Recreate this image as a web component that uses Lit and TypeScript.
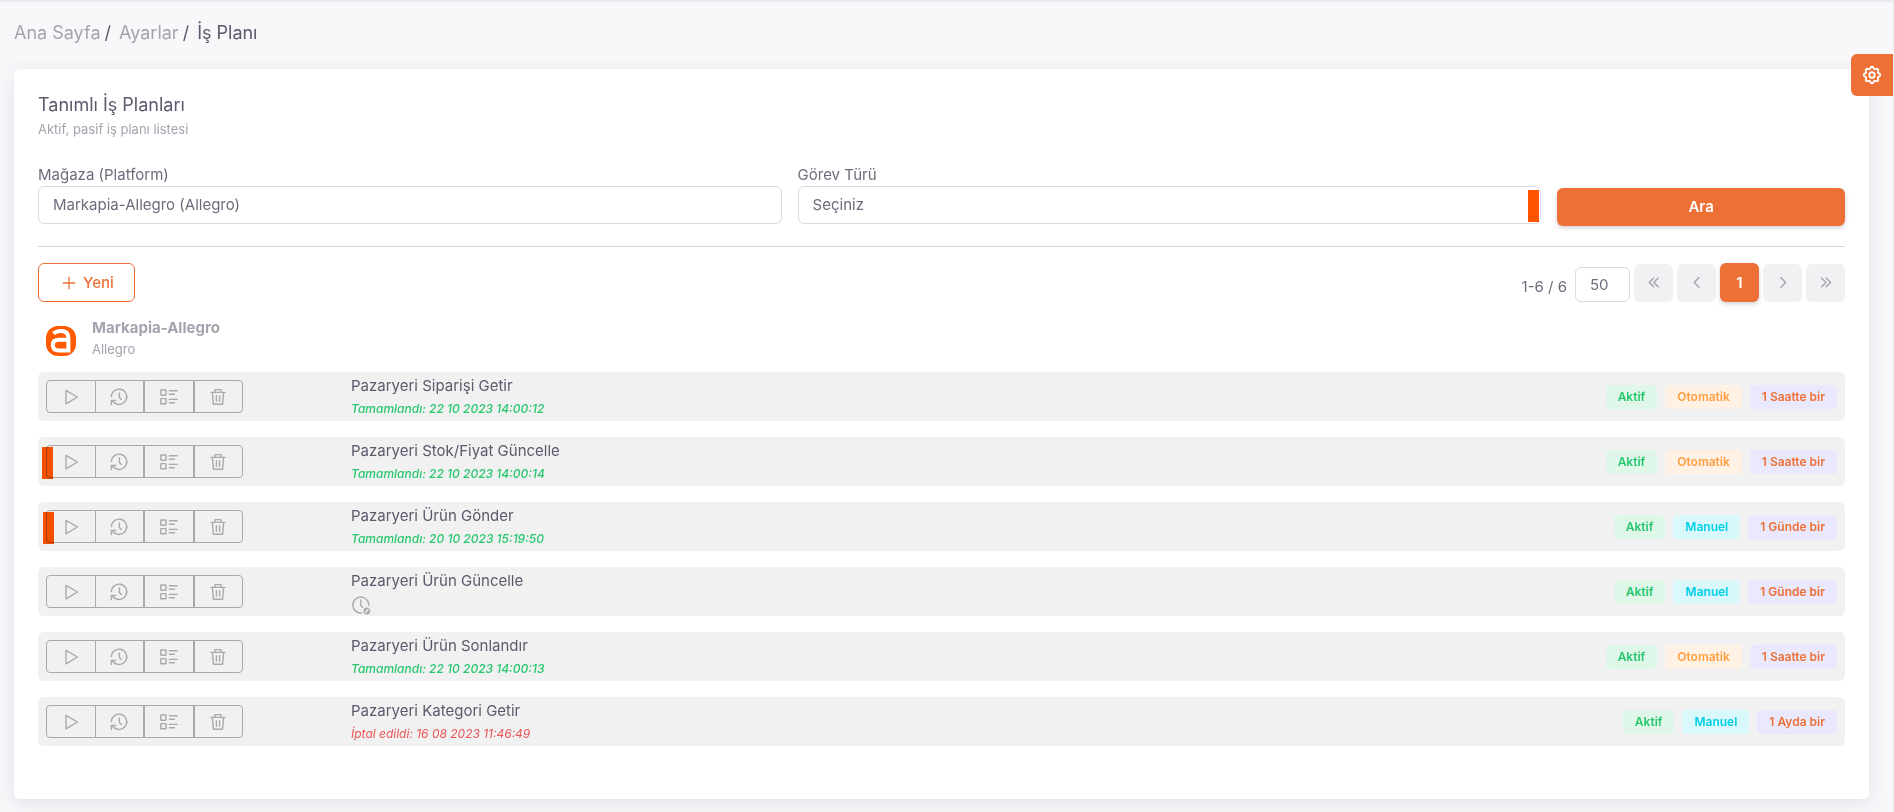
import { LitElement, html, css, svg } from "lit";
import { customElement } from "lit/decorators.js";

type Job = {
  name: string;
  state: "done" | "cancelled" | "waiting";
  time?: string;
  manual: boolean;
  period: string;
  mark?: "first" | "second";
};

const JOBS: Job[] = [
  { name: "Pazaryeri Siparişi Getir", state: "done", time: "22 10 2023 14:00:12", manual: false, period: "1 Saatte bir" },
  { name: "Pazaryeri Stok/Fiyat Güncelle", state: "done", time: "22 10 2023 14:00:14", manual: false, period: "1 Saatte bir", mark: "first" },
  { name: "Pazaryeri Ürün Gönder", state: "done", time: "20 10 2023 15:19:50", manual: true, period: "1 Günde bir", mark: "second" },
  { name: "Pazaryeri Ürün Güncelle", state: "waiting", manual: true, period: "1 Günde bir" },
  { name: "Pazaryeri Ürün Sonlandır", state: "done", time: "22 10 2023 14:00:13", manual: false, period: "1 Saatte bir" },
  { name: "Pazaryeri Kategori Getir", state: "cancelled", time: "16 08 2023 11:46:49", manual: true, period: "1 Ayda bir" },
];

const icon = (body: unknown, size = 20) => html`<svg
  class="icon" width=${size} height=${size} viewBox="0 0 20 20" fill="none"
  stroke="currentColor" stroke-width="1.4" stroke-linejoin="round" stroke-linecap="round" aria-hidden="true"
>${body}</svg>`;

const ICONS = {
  play: svg`<path d="M5 3.4 16.4 10 5 16.8Z"/>`,
  history: svg`<path d="M2.4 9.6a7.7 7.7 0 1 1 3.4 6.6"/><path d="M2.4 17.6v-4.2h4.4M2.6 13.6l3.8 2.9"/><path d="M10.4 6v4.6l2 2"/>`,
  list: svg`<rect x="1.8" y="3" width="5.2" height="5.2" rx=".4"/><rect x="1.8" y="11.6" width="5.2" height="5.2" rx=".4"/><path d="M10.4 3.8h7.8M10.4 7.2h5M10.4 12.4h7.8M10.4 15.8h5"/>`,
  trash: svg`<path d="M3 5.4h14M4.4 5.4l1 11.8h9.2l1-11.8M7 5.2V2.6h6v2.6M8.4 8.8v5.4M11.6 8.8v5.4"/>`,
  plus: svg`<path d="M10 3.6v12.8M3.6 10h12.8"/>`,
  first: svg`<path d="m9.6 5-4.4 4.4 4.4 4.4M14.2 5 9.8 9.4l4.4 4.4"/>`,
  prev: svg`<path d="m12 4.6-4.8 4.8 4.8 4.8"/>`,
  next: svg`<path d="m7.8 4.6 4.8 4.8-4.8 4.8"/>`,
  last: svg`<path d="m5.6 5 4.4 4.4-4.4 4.4M10.2 5l4.4 4.4-4.4 4.4"/>`,
  waiting: svg`<path d="M17.8 10.4A8 8 0 1 0 10.6 18"/><path d="M9.8 5v5.2l1.8 2"/><circle cx="15.8" cy="16" r="3.4" fill="currentColor" stroke="none"/><path d="m14.4 17.2 2.8-2.6" stroke="#f1f1f1"/>`,
};

@customElement("app-root")
export class AppRoot extends LitElement {
  static styles = css`
    :host {
      display: block;
      min-height: 100vh;
      box-sizing: border-box;
      position: relative;
      padding: 16px 24px 13px 14px;
      background: #f8f7fa;
      border-right: 1px solid #eeedf1;
      box-shadow: inset 0 3px 3px -2px rgba(75, 70, 92, 0.14);
      font: 15px/22px Inter, "Liberation Sans", sans-serif;
      color: #6f6b7d;
    }
    *, *::before { box-sizing: border-box; }
    button, input, select { font: inherit; color: inherit; margin: 0; }
    button { cursor: pointer; }
    .icon { display: block; }
    .crumbs { display: flex; gap: 4px; font-size: 18px; line-height: 34px; color: #5d596c; }
    .crumbs a { color: #a5a3ae; text-decoration: none; }
    .crumbs a + span { margin-right: 4px; }
    .settings {
      position: absolute; right: 0; top: 54px; width: 42px; height: 42px;
      display: grid; place-items: center; border: 0; padding: 0;
      background: #ed7137; color: #fff; border-radius: 6px 0 0 6px;
    }
    .card {
      margin-top: 19px; padding: 24px 24px 53px; background: #fff; border-radius: 6px;
      box-shadow: 0 4px 18px rgba(75, 70, 92, 0.12);
    }
    h1 { margin: 0; font-weight: 400; font-size: 18px; line-height: 24px; color: #5d596c; }
    .sub { margin: 2px 0 0; font-size: 13px; line-height: 20px; color: #a5a3ae; }
    .filters { display: grid; grid-template-columns: repeat(12, 1fr); column-gap: 16px; margin-top: 25px; align-items: start; }
    .field { grid-column: span 5; position: relative; }
    .field label { display: block; line-height: 22px; }
    .field select {
      display: block; width: 100%; height: 38px; appearance: none; padding: 0 14px;
      background: #fff; border: 1px solid #dbdade; border-radius: 6px;
    }
    .caret { position: absolute; right: 2px; bottom: 2px; width: 11px; height: 32px; background: #ff5500; }
    .search {
      grid-column: span 2; margin-top: 24px; height: 38px; border: 0; border-radius: 6px;
      background: #ed7137; color: #fff; font-weight: 600;
      box-shadow: 0 2px 4px rgba(165, 163, 174, 0.5);
    }
    hr { border: 0; height: 1px; margin: 20px 0 16px; background: #d6d6d9; }
    .bar { display: flex; justify-content: space-between; align-items: flex-start; }
    .new {
      display: flex; align-items: center; gap: 5px; height: 39px; padding: 0 20px 0 21px;
      border: 1px solid #ed7137; border-radius: 6px; background: none; color: #ed7137; font-weight: 500;
    }
    .pager { display: flex; gap: 4px; align-items: flex-end; }
    .pager label { line-height: 30px; margin-right: 4px; }
    .pager input {
      width: 55px; height: 35px; padding: 0 14px; border: 1px solid #dbdade; border-radius: 6px; background: #fff;
    }
    .pager button {
      display: grid; place-items: center; width: 39px; height: 38px; padding: 0; border: 0;
      border-radius: 6px; background: #f1f1f3; color: #a5a3ae; font-weight: 600;
    }
    .pager .current { height: 39px; background: #ed7137; color: #fff; box-shadow: 0 2px 4px rgba(165, 163, 174, 0.5); }
    .store { display: flex; gap: 16px; align-items: flex-end; margin: 15px 0 12px; padding-left: 8px; color: #a5a3ae; }
    .store h2 { margin: 0; font-size: 15px; line-height: 22px; font-weight: 700; }
    .store p { margin: 0; font-size: 13px; line-height: 21px; }
    .store .logo { display: block; margin-bottom: 4px; }
    ul { list-style: none; margin: 0; padding: 0; display: grid; gap: 16px; }
    li {
      position: relative; display: grid; grid-template-columns: 305px 1fr auto; align-items: center;
      height: 49px; padding: 0 8px; border-radius: 6px; background: #f1f1f1;
    }
    .actions { display: flex; width: 197px; height: 33px; border: 1px solid #a8aaae; border-radius: 4px; }
    .actions button {
      flex: 1 1 0; display: grid; place-items: center; padding: 0; border: 0; background: none; color: #a8aaae;
    }
    .actions button + button { border-left: 1px solid #a8aaae; }
    .actions button:nth-child(n + 3) { border-left-width: 2px; }
    .mark { position: absolute; top: 10px; width: 11px; height: 32px; background: #ff5500; mix-blend-mode: multiply; }
    .mark.first { left: 4px; }
    .mark.second { left: 5px; }
    .info { align-self: start; padding-top: 3px; }
    .name { display: block; line-height: 22px; color: #5d596c; }
    .time { display: block; font-size: 12px; line-height: 24px; font-style: italic; }
    .time.done { color: #28c76f; font-weight: 500; }
    .time.cancelled { color: #ea5455; }
    .time.waiting { color: #a8aaae; padding-top: 3px; }
    .tags { display: flex; gap: 8px; }
    .tag { padding: 0 12px; border-radius: 4px; font-size: 12px; line-height: 24px; font-weight: 600; }
    .active { background: #dff7e9; color: #28c76f; }
    .auto { background: #fff1e3; color: #ff9f43; }
    .manual { background: #d9f8fc; color: #00cfe8; }
    .period { background: #eae8fd; color: #ed7137; }
  `;

  private job(j: Job) {
    return html`<li>
      <div class="actions" role="group" aria-label=${j.name}>
        <button aria-label="Çalıştır">${icon(ICONS.play)}</button>
        <button aria-label="Geçmiş">${icon(ICONS.history)}</button>
        <button aria-label="Detay">${icon(ICONS.list)}</button>
        <button aria-label="Sil">${icon(ICONS.trash)}</button>
      </div>
      <div class="info">
        <span class="name">${j.name}</span>
        <span class="time ${j.state}">${j.state === "waiting"
          ? icon(ICONS.waiting)
          : `${j.state === "done" ? "Tamamlandı" : "İptal edildi"}: ${j.time}`}</span>
      </div>
      <div class="tags">
        <span class="tag active">Aktif</span>
        <span class="tag ${j.manual ? "manual" : "auto"}">${j.manual ? "Manuel" : "Otomatik"}</span>
        <span class="tag period">${j.period}</span>
      </div>
      ${j.mark ? html`<span class="mark ${j.mark}"></span>` : ""}
    </li>`;
  }

  render() {
    return html`
      <nav class="crumbs">
        <a href="#">Ana Sayfa</a><span>/</span>
        <a href="#">Ayarlar</a><span>/</span>
        <span>İş Planı</span>
      </nav>
      <main class="card">
        <h1>Tanımlı İş Planları</h1>
        <p class="sub">Aktif, pasif iş planı listesi</p>
        <form class="filters" @submit=${(e: Event) => e.preventDefault()}>
          <div class="field">
            <label for="store">Mağaza (Platform)</label>
            <select id="store"><option>Markapia-Allegro (Allegro)</option></select>
          </div>
          <div class="field">
            <label for="kind">Görev Türü</label>
            <select id="kind"><option>Seçiniz</option></select>
            <span class="caret"></span>
          </div>
          <button class="search">Ara</button>
        </form>
        <hr />
        <div class="bar">
          <button class="new">${icon(ICONS.plus, 18)}Yeni</button>
          <div class="pager">
            <label for="size">1-6 / 6</label>
            <input id="size" value="50" />
            <button aria-label="İlk">${icon(ICONS.first)}</button>
            <button aria-label="Önceki">${icon(ICONS.prev)}</button>
            <button class="current">1</button>
            <button aria-label="Sonraki">${icon(ICONS.next)}</button>
            <button aria-label="Son">${icon(ICONS.last)}</button>
          </div>
        </div>
        <div class="store">
          <svg class="logo" width="30" height="30" viewBox="0 0 30 30" aria-hidden="true">
            <rect width="30" height="30" rx="12" fill="#ff5a00" />
            <path d="M7.5 7.6Q10.5 5 15 5Q22.4 5 22.4 12V26.6M22.4 13.8H13Q6.8 13.8 6.8 19Q6.8 24.6 13 24.6H22.4" fill="none" stroke="#fff" stroke-width="4" />
          </svg>
          <div><h2>Markapia-Allegro</h2><p>Allegro</p></div>
        </div>
        <ul>${JOBS.map((j) => this.job(j))}</ul>
      </main>
      <button class="settings" aria-label="Ayarlar">
        <svg width="22" height="22" viewBox="0 0 24 24" fill="none" stroke="currentColor" stroke-width="2" stroke-linecap="round" stroke-linejoin="round" aria-hidden="true">
          <path d="M10.325 4.317c.426-1.756 2.924-1.756 3.35 0a1.724 1.724 0 0 0 2.573 1.066c1.543-.94 3.31.826 2.37 2.37a1.724 1.724 0 0 0 1.065 2.572c1.756.426 1.756 2.924 0 3.35a1.724 1.724 0 0 0-1.066 2.573c.94 1.543-.826 3.31-2.37 2.37a1.724 1.724 0 0 0-2.572 1.065c-.426 1.756-2.924 1.756-3.35 0a1.724 1.724 0 0 0-2.573-1.066c-1.543.94-3.31-.826-2.37-2.37a1.724 1.724 0 0 0-1.065-2.572c-1.756-.426-1.756-2.924 0-3.35a1.724 1.724 0 0 0 1.066-2.573c-.94-1.543.826-3.31 2.37-2.37 1 .608 2.296.07 2.572-1.065z" />
          <circle cx="12" cy="12" r="3" />
        </svg>
      </button>
    `;
  }
}
